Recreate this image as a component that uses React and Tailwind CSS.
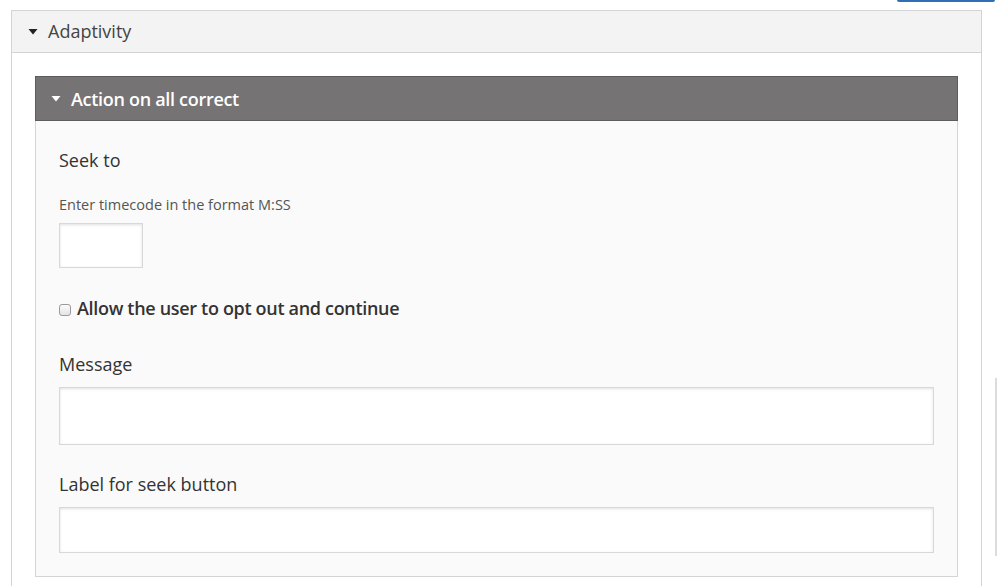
import React from 'react';

const Caret = ({ className }) => (
  <svg width="10" height="6" viewBox="0 0 10 6" className={className}>
    <path d="M0.5 0 L9.5 0 L5 5.5 Z" fill="currentColor" />
  </svg>
);

const fieldClass =
  'block bg-white border border-[#d8d8d8] shadow-[inset_0_1px_3px_rgba(0,0,0,0.12)] outline-none';

export default function App() {
  return (
    <div className="relative w-[997px] h-[586px] overflow-hidden bg-white font-['Open_Sans',sans-serif] text-[#333]">
      {/* top toolbar strip */}
      <div className="h-[10px] flex justify-end pr-[2px]">
        <div className="w-[98px] h-[2px] bg-[#2f6fb6] rounded-b-[3px]" />
      </div>

      {/* scrollbar */}
      <div className="absolute right-0 top-[378px] w-[2px] h-[178px] bg-[#dcdcdc]" />

      <div className="ml-[11px] w-[971px] h-[576px] border border-b-0 border-[#d4d4d4]">
        {/* Adaptivity header */}
        <div className="h-[42px] bg-[#f3f3f3] border-b border-[#d4d4d4] flex items-center pl-[16px] gap-[10px]">
          <Caret className="text-[#222]" />
          <span className="text-[18px] text-[#444] leading-none -mt-[2px]">Adaptivity</span>
        </div>

        <div className="px-[23px] pt-[23px]">
          <div className="border border-[#d4d4d4]">
            {/* Action header */}
            <div className="h-[45px] bg-[#767374] border border-[#5e5c5d] -m-px mb-0 flex items-center pl-[15px] gap-[10px]">
              <Caret className="text-white" />
              <span className="text-[18px] font-semibold text-white leading-none tracking-[-0.3px]">
                Action on all correct
              </span>
            </div>

            <div className="bg-[#fafafa] px-[23px] pt-[27px] pb-[23px]">
              <div className="text-[18px] font-medium leading-[24px]">Seek to</div>

              <div className="mt-[24px] text-[14.5px] text-[#555] leading-[18px]">
                Enter timecode in the format M:SS
              </div>
              <input className={`${fieldClass} w-[84px] h-[45px] mt-[9px]`} />

              <label className="mt-[28px] flex items-center gap-[6px]">
                <span className="w-[12px] h-[12px] border border-[#9a9a9a] rounded-[3px] bg-gradient-to-b from-[#fbfbfb] to-[#e4e4e4] mt-[3px] shrink-0" />
                <span className="text-[18px] font-semibold leading-[24px] tracking-[-0.32px]">
                  Allow the user to opt out and continue
                </span>
              </label>

              <div className="mt-[32px] text-[18px] font-medium leading-[24px]">Message</div>
              <textarea className={`${fieldClass} w-full h-[58px] mt-[11px] resize-none`} />

              <div className="mt-[27px] text-[18px] font-medium leading-[24px]">Label for seek button</div>
              <input className={`${fieldClass} w-full h-[46px] mt-[11px]`} />
            </div>
          </div>
        </div>
      </div>
    </div>
  );
}
